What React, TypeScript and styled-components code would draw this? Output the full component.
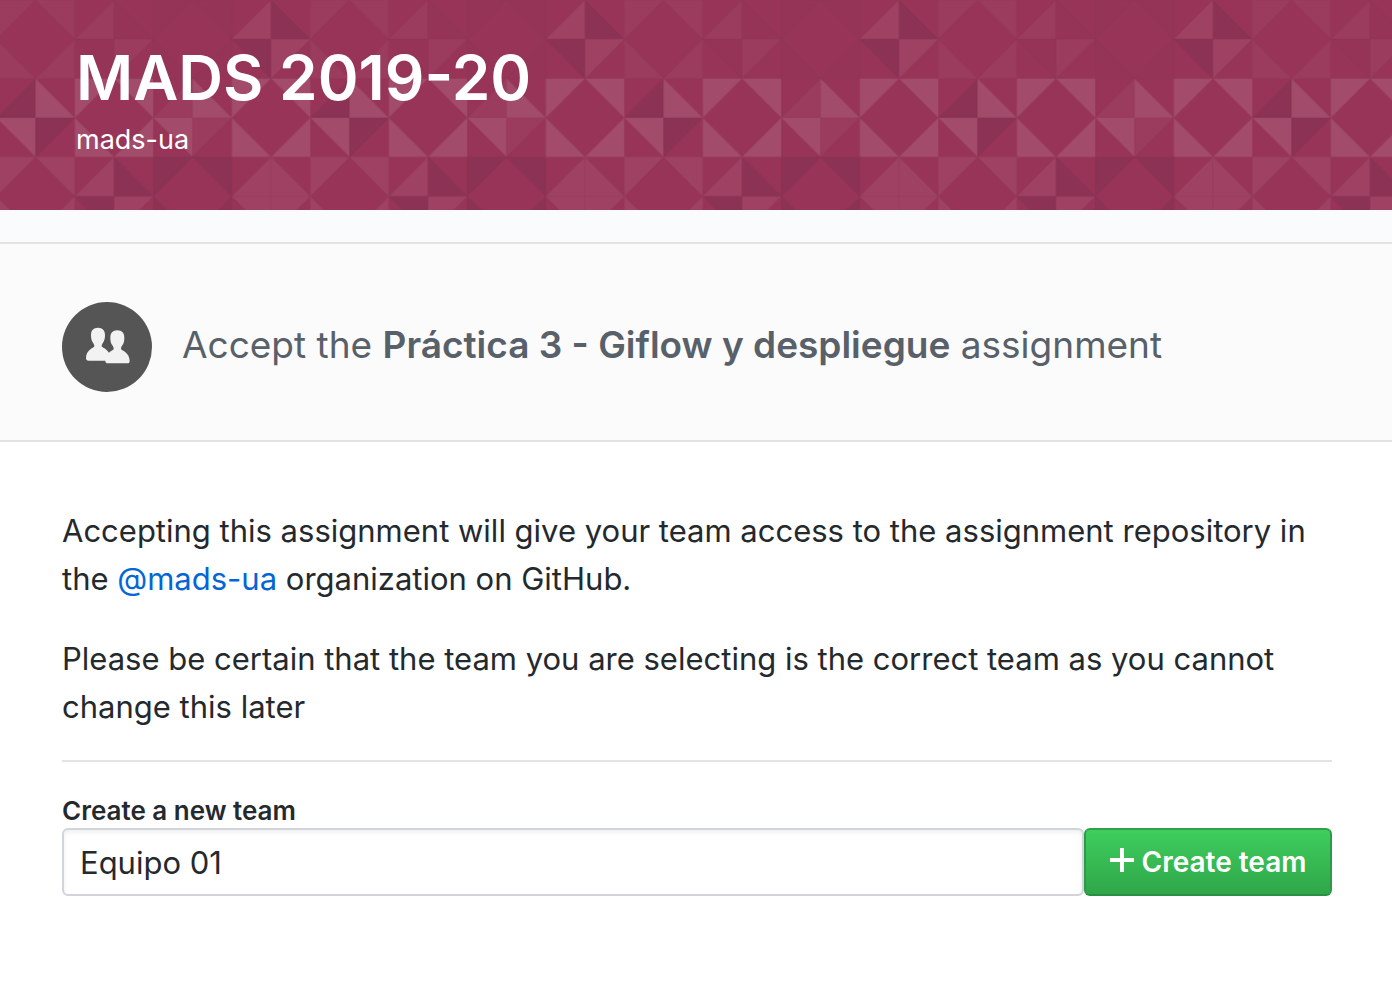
import React, { useState } from "react";
import styled, { createGlobalStyle } from "styled-components";

const GlobalStyle = createGlobalStyle`
  *, *::before, *::after { box-sizing: border-box; }
  body {
    margin: 0;
    background: #fff;
    color: #24292e;
    font-family: Inter, "Liberation Sans", sans-serif;
    font-size: 31px;
    line-height: 48px;
  }
`;

const Banner = styled.header`
  display: grid;
  height: 210px;
  background: #973457;
  color: #fff;
  overflow: hidden;
`;

const Mosaic = styled.svg`
  grid-area: 1 / 1;
  width: 100%;
  height: 210px;
`;

const BannerText = styled.div`
  grid-area: 1 / 1;
  z-index: 1;
  padding: 40px 76px 0;
`;

const Title = styled.h1`
  margin: 0;
  font-size: 62px;
  font-weight: 600;
  line-height: 76px;
`;

const Organization = styled.p`
  margin: 0;
  font-size: 27px;
  line-height: 48px;
`;

const Strip = styled.div`
  background: #fafbfd;
  display: flow-root;
`;

const AssignmentBar = styled.section`
  display: flex;
  align-items: center;
  gap: 30px;
  margin-top: 32px;
  padding: 58px 60px 48px 62px;
  border: solid #e1e2e3;
  border-width: 2px 0;
  background: #fbfbfb;
`;

const TeamIcon = styled.svg`
  flex: none;
  width: 90px;
  height: 90px;
`;

const AssignmentTitle = styled.h2`
  margin: 0;
  padding-bottom: 4px;
  color: #586069;
  font-size: 37px;
  font-weight: 400;
  line-height: 48px;

  strong { font-weight: 600; }
`;

const Content = styled.main`
  padding: 65px 60px 60px 62px;
`;

const Copy = styled.div`
  display: grid;
  gap: 32px;
`;

const Paragraph = styled.p`
  margin: 0;
`;

const OrgLink = styled.a`
  color: #0366d6;
  text-decoration: none;
`;

const Divider = styled.hr`
  height: 2px;
  margin: 29px 0 32px;
  border: 0;
  background: #e1e4e5;
`;

const FieldLabel = styled.label`
  display: block;
  font-size: 26px;
  font-weight: 600;
  line-height: 34px;
`;

const FieldRow = styled.div`
  display: flex;
`;

const TeamInput = styled.input`
  flex: 1;
  min-width: 0;
  height: 68px;
  padding: 0 16px;
  border: 2px solid #d1d5da;
  border-radius: 6px;
  background: #fff;
  box-shadow: inset 0 2px 4px rgba(27, 31, 35, 0.08);
  color: #24292e;
  font: inherit;
  outline: none;
`;

const CreateButton = styled.button`
  display: flex;
  align-items: center;
  justify-content: center;
  gap: 8px;
  width: 248px;
  height: 68px;
  padding: 0;
  border: 2px solid;
  border-color: #31a24c #2e9a47 #2a8f42;
  border-radius: 6px;
  background: linear-gradient(#3fcf5f, #2fa548) border-box;
  color: #fff;
  font: inherit;
  font-size: 28px;
  font-weight: 600;
`;

const PlusIcon = styled.svg`
  width: 24px;
  height: 28px;
`;

const L = "#9b3b5e";
const M = "#9e4163";
const H = "#a24b6a";
const D = "#8c3254";
const S = "#953457";

type Block = { kind: "corners" | "diamond"; colors: [string, string, string, string] };

const rows: Block[][] = [
  [
    { kind: "corners", colors: [L, L, L, L] },
    { kind: "diamond", colors: [L, S, S, L] },
    { kind: "corners", colors: [S, S, S, S] },
    { kind: "diamond", colors: [M, D, D, M] },
  ],
  [
    { kind: "diamond", colors: [D, H, H, D] },
    { kind: "corners", colors: [H, H, H, H] },
    { kind: "diamond", colors: [L, H, H, L] },
    { kind: "corners", colors: [H, H, H, H] },
  ],
  [
    { kind: "corners", colors: [M, M, M, M] },
    { kind: "diamond", colors: [M, D, D, M] },
    { kind: "corners", colors: [D, D, D, D] },
    { kind: "diamond", colors: [M, M, M, M] },
  ],
];

const shapes = {
  corners: ["0,0 1,0 0,1", "1,0 2,0 2,1", "0,1 1,2 0,2", "2,1 2,2 1,2"],
  diamond: ["1,0 1,1 0,1", "1,0 2,1 1,1", "0,1 1,1 1,2", "1,1 2,1 1,2"],
};

const BannerMosaic = () => (
  <Mosaic aria-hidden="true">
    <defs>
      <pattern
        id="mosaic"
        width="8"
        height="6"
        patternUnits="userSpaceOnUse"
        patternTransform="translate(-3.7 0) scale(39.25)"
      >
        {rows.map((row, y) =>
          row.map((block, x) => (
            <g key={`${x}-${y}`} transform={`translate(${x * 2} ${y * 2})`}>
              {shapes[block.kind].map((points, i) => (
                <polygon
                  key={points}
                  points={points}
                  fill={block.colors[i]}
                  stroke="#000"
                  strokeOpacity="0.02"
                  strokeWidth="0.03"
                />
              ))}
            </g>
          ))
        )}
      </pattern>
    </defs>
    <rect width="100%" height="100%" fill="url(#mosaic)" />
  </Mosaic>
);

const person =
  "M36 0C22 0 15 9 15 22C15 33 17 39 21 45C24 49 25 53 25 56C23 61 0 67 0 92C0 97 3 99 8 99H66C71 99 73 97 73 92C73 67 50 61 47 56C47 53 48 49 51 45C55 39 57 33 57 22C57 9 50 0 36 0Z";

export default function App() {
  const [team, setTeam] = useState("Equipo 01");
  return (
    <>
      <GlobalStyle />
      <Banner>
        <BannerMosaic />
        <BannerText>
          <Title>MADS 2019-20</Title>
          <Organization>mads-ua</Organization>
        </BannerText>
      </Banner>
      <Strip>
        <AssignmentBar>
          <TeamIcon viewBox="0 0 270 270" aria-hidden="true">
            <circle cx="135" cy="135" r="135" fill="#555" />
            <path d={person} fill="#f2f2f2" transform="translate(72 77)" />
            <path d={person} fill="#f2f2f2" transform="translate(130 85)" />
          </TeamIcon>
          <AssignmentTitle>
            Accept the <strong>Práctica 3 - Giflow y despliegue</strong> assignment
          </AssignmentTitle>
        </AssignmentBar>
      </Strip>
      <Content>
        <Copy>
          <Paragraph>
            Accepting this assignment will give your team access to the assignment repository in
            the <OrgLink href="#mads-ua">@mads-ua</OrgLink> organization on GitHub.
          </Paragraph>
          <Paragraph>
            Please be certain that the team you are selecting is the correct team as you cannot
            change this later
          </Paragraph>
        </Copy>
        <Divider />
        <form onSubmit={(e) => e.preventDefault()}>
          <FieldLabel htmlFor="team-name">Create a new team</FieldLabel>
          <FieldRow>
            <TeamInput id="team-name" value={team} onChange={(e) => setTeam(e.target.value)} />
            <CreateButton type="submit">
              <PlusIcon viewBox="0 0 24 28" aria-hidden="true">
                <path d="M10 0h4v10h10v4H14v10h-4V14H0v-4h10z" fill="#fff" />
              </PlusIcon>
              Create team
            </CreateButton>
          </FieldRow>
        </form>
      </Content>
    </>
  );
}
